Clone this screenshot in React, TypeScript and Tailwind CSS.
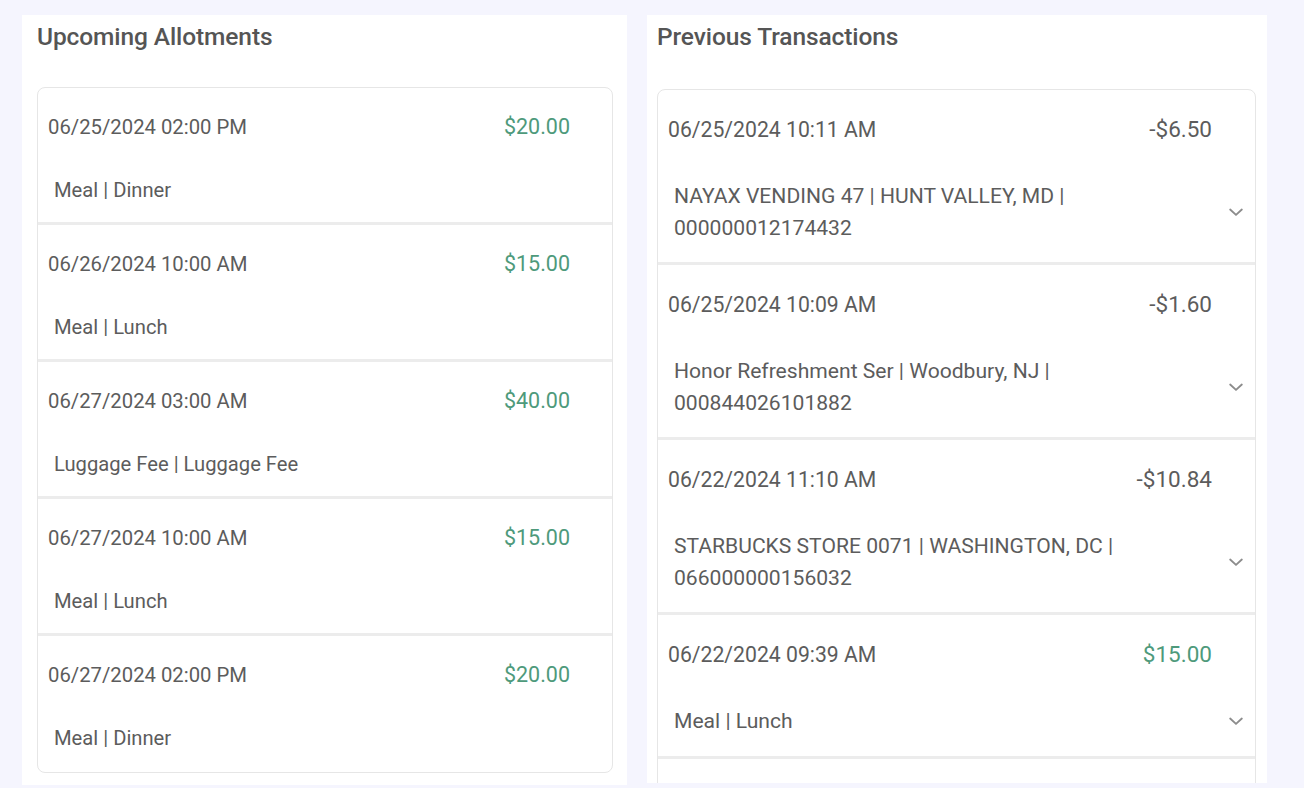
import React from "react";

type Allotment = { date: string; amount: string; desc: string };
type Txn = { date: string; amount: string; desc: string[]; credit?: boolean };

const allotments: Allotment[] = [
  { date: "06/25/2024 02:00 PM", amount: "$20.00", desc: "Meal | Dinner" },
  { date: "06/26/2024 10:00 AM", amount: "$15.00", desc: "Meal | Lunch" },
  { date: "06/27/2024 03:00 AM", amount: "$40.00", desc: "Luggage Fee | Luggage Fee" },
  { date: "06/27/2024 10:00 AM", amount: "$15.00", desc: "Meal | Lunch" },
  { date: "06/27/2024 02:00 PM", amount: "$20.00", desc: "Meal | Dinner" },
];

const txns: Txn[] = [
  {
    date: "06/25/2024 10:11 AM",
    amount: "-$6.50",
    desc: ["NAYAX VENDING 47 | HUNT VALLEY, MD |", "000000012174432"],
  },
  {
    date: "06/25/2024 10:09 AM",
    amount: "-$1.60",
    desc: ["Honor Refreshment Ser | Woodbury, NJ |", "000844026101882"],
  },
  {
    date: "06/22/2024 11:10 AM",
    amount: "-$10.84",
    desc: ["STARBUCKS STORE 0071 | WASHINGTON, DC |", "066000000156032"],
  },
  { date: "06/22/2024 09:39 AM", amount: "$15.00", desc: ["Meal | Lunch"], credit: true },
];

function Chevron() {
  return (
    <svg width="20" height="20" viewBox="0 0 24 24" fill="none" stroke="#8c8c8c" strokeWidth="2.2" strokeLinecap="round" strokeLinejoin="round">
      <path d="M5 9l7 6.5L19 9" />
    </svg>
  );
}

export default function App() {
  return (
    <div
      className="h-[788px] overflow-hidden bg-[#f5f5fe] flex gap-5 pl-[22px] pt-[15px] text-[#5c5c5c]"
      style={{ fontFamily: "Roboto, 'Noto Sans', sans-serif" }}
    >
      <section className="w-[605px] h-[770px] bg-white pl-[15px] pr-[14px] pt-[8px]">
        <h2 className="text-[24.5px] font-medium leading-[28px] text-[#555555] tracking-[-0.1px]">Upcoming Allotments</h2>
        <div className="mt-[36px] rounded-lg border border-[#e6e6e6] overflow-hidden">
          {allotments.map((a, i) => (
            <div key={i} className={i > 0 ? "border-t-[3px] border-[#ececec]" : ""}>
              <div className={(i === allotments.length - 1 ? "h-[136px]" : "h-[134px]") + " pl-[10px] pr-[42px] pt-[25px]"}>
                <div className="flex justify-between items-center h-[28px]">
                  <span className="text-[20.3px]">{a.date}</span>
                  <span className="text-[21.5px] text-[#4e9a7b]">{a.amount}</span>
                </div>
                <div className="mt-[35px] pl-[6px] text-[20.2px] leading-[28px]">{a.desc}</div>
              </div>
            </div>
          ))}
        </div>
      </section>

      <section className="w-[620px] h-[768px] bg-white pl-[10px] pr-[11px] pt-[8px] overflow-hidden">
        <h2 className="text-[24.5px] font-medium leading-[28px] text-[#555555] tracking-[-0.1px]">Previous Transactions</h2>
        <div className="mt-[38px] rounded-t-lg border border-[#e6e6e6]">
          {txns.map((t, i) => (
            <div key={i} className={i > 0 ? "border-t-[3px] border-[#ececec]" : ""}>
              <div className={(t.desc.length > 1 ? "pb-[18px]" : "pb-[19px]") + " pl-[10px] pr-[43px] pt-[26px]"}>
                <div className="flex justify-between items-center h-[28px]">
                  <span className="text-[21.2px]">{t.date}</span>
                  <span className={"text-[22.5px] " + (t.credit ? "text-[#4e9a7b]" : "text-[#5c5c5c]")}>{t.amount}</span>
                </div>
                <div className="mt-[36px] flex items-center">
                  <div className="pl-[6px] text-[21.1px] leading-[32px] flex-1">
                    {t.desc.map((l, j) => (
                      <div key={j}>{l}</div>
                    ))}
                  </div>
                  <div className="-mr-[34px]">
                    <Chevron />
                  </div>
                </div>
              </div>
            </div>
          ))}
          <div className="border-t-[3px] border-[#ececec] h-[40px]" />
        </div>
      </section>
    </div>
  );
}
